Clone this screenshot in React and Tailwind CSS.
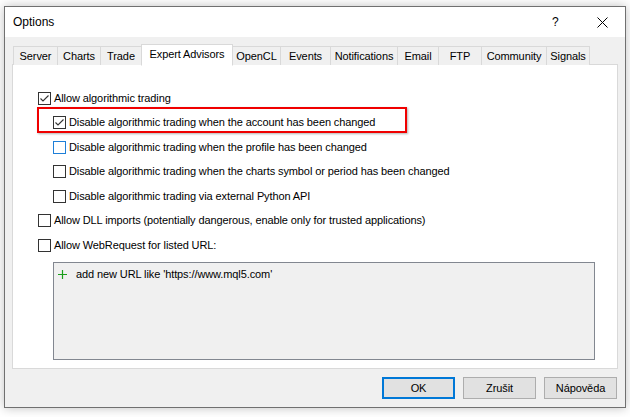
import React from 'react';

const tabs = [
  { label: 'Server', w: 'w-[45px]' },
  { label: 'Charts', w: 'w-[44px]' },
  { label: 'Trade', w: 'w-[42px]' },
  { label: 'Expert Advisors', w: 'w-[92px]', active: true },
  { label: 'OpenCL', w: 'w-[49px]' },
  { label: 'Events', w: 'w-[51px]' },
  { label: 'Notifications', w: 'w-[68px]' },
  { label: 'Email', w: 'w-[42px]' },
  { label: 'FTP', w: 'w-[44px]' },
  { label: 'Community', w: 'w-[66px]' },
  { label: 'Signals', w: 'w-[44px]' },
];

const CheckBox = ({ checked, focused }) => (
  <span
    className={
      'w-[13px] h-[13px] shrink-0 bg-white border flex items-center justify-center ' +
      (focused ? 'border-[#1e7fd8]' : 'border-[#333333]')
    }
  >
    {checked && (
      <svg width="11" height="11" viewBox="0 0 11 11">
        <path d="M1.5 5.5 L4 8 L9.5 2.5" fill="none" stroke="#333333" strokeWidth="1.1" />
      </svg>
    )}
  </span>
);

const Row = ({ children, checked, focused, indent }) => (
  <div className={'h-[24.5px] flex items-center gap-[3px] ' + (indent ? 'pl-[15px]' : '')}>
    <CheckBox checked={checked} focused={focused} />
    <span className="leading-none">{children}</span>
  </div>
);

const Button = ({ children, primary }) => (
  <button
    className={
      'w-[73px] h-[22px] bg-[#e1e1e1] text-[#000] leading-none ' +
      (primary ? 'border-2 border-[#0078d7]' : 'border border-[#adadad]')
    }
  >
    {children}
  </button>
);

export default function App() {
  return (
    <div
      className="w-[630px] h-[417px] bg-white pt-[6px] pl-[4px] text-[11px] tracking-[-0.1px] text-black overflow-hidden"
      style={{ fontFamily: '"Liberation Sans", Arial, sans-serif' }}
    >
      <div className="w-[622px] h-[402px] border border-[#707070] bg-[#f0f0f0] flex flex-col shadow-[0_0_10px_rgba(0,0,0,0.25)]">
        {/* title bar */}
        <div className="h-[30px] bg-white flex items-center pl-[8px] shrink-0">
          <span className="text-[12px] tracking-normal flex-1">Options</span>
          <span className="text-[12px] w-[10px] mr-[35px]">?</span>
          <svg width="11" height="11" viewBox="0 0 11 11" className="mr-[17px]">
            <path d="M0.5 0.5 L10.5 10.5 M10.5 0.5 L0.5 10.5" stroke="#000" strokeWidth="1" />
          </svg>
        </div>

        <div className="flex-1 px-[7px] pt-[7px]">
          {/* tabs */}
          <div className="flex items-end h-[21px] pl-[1px] relative z-10">
            {tabs.map((t, i) => (
              <div
                key={t.label}
                className={
                  t.w +
                  ' flex items-center justify-center border border-[#d9d9d9] leading-none ' +
                  (i > 0 ? '-ml-px ' : '') +
                  (t.active
                    ? 'h-[22px] -mb-px bg-white border-b-white relative z-10 pb-[2px]'
                    : 'h-[19px] bg-[#f0f0f0] border-b-0')
                }
              >
                {t.label}
              </div>
            ))}
          </div>

          {/* panel */}
          <div className="relative -mt-px h-[305px] border border-[#d9d9d9] bg-white pt-[21px] pl-[25px]">
            <Row checked>Allow algorithmic trading</Row>
            <Row checked indent>Disable algorithmic trading when the account has been changed</Row>
            <Row focused indent>Disable algorithmic trading when the profile has been changed</Row>
            <Row indent>Disable algorithmic trading when the charts symbol or period has been changed</Row>
            <Row indent>Disable algorithmic trading via external Python API</Row>
            <Row>Allow DLL imports (potentially dangerous, enable only for trusted applications)</Row>
            <Row>Allow WebRequest for listed URL:</Row>

            <div className="ml-[15px] mt-[4px] w-[542px] h-[98px] border border-[#828790] bg-[#f0f0f0] pt-[5px] pl-[4px]">
              <div className="flex items-center gap-[9px] h-[14px]">
                <svg width="9" height="9" viewBox="0 0 9 9">
                  <path d="M4.5 0 V9 M0 4.5 H9" stroke="#1a9e1a" strokeWidth="1.2" />
                </svg>
                <span className="leading-none">add new URL like 'https://www.mql5.com'</span>
              </div>
            </div>

            {/* highlight annotation */}
            <div className="absolute left-[24px] top-[42px] w-[370px] h-[26px] border-2 border-[#f00000] shadow-[1px_1px_2px_rgba(0,0,0,0.3)] pointer-events-none" />
          </div>

          {/* buttons */}
          <div className="flex justify-end gap-[8px] mt-[8px] pr-[1px]">
            <Button primary>OK</Button>
            <Button>Zrušit</Button>
            <Button>Nápověda</Button>
          </div>
        </div>
      </div>
    </div>
  );
}
